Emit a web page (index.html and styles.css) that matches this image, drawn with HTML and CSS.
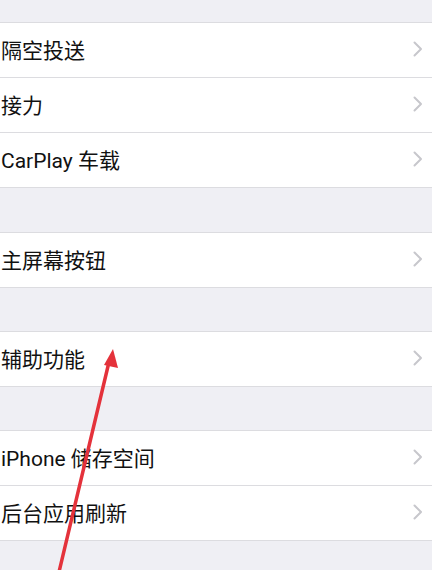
FILE: index.html
```html
<!DOCTYPE html>
<html lang="zh">
<head>
<meta charset="utf-8">
<link rel="stylesheet" href="styles.css">
</head>
<body>
<div class="screen">
  <div class="gap gap-top"></div>
  <div class="group">
    <div class="row"><span class="label">隔空投送</span><svg class="chev" width="10" height="16" viewBox="0 0 10 16"><polyline points="1.5,1.5 8,8 1.5,14.5"/></svg></div>
    <div class="row"><span class="label">接力</span><svg class="chev" width="10" height="16" viewBox="0 0 10 16"><polyline points="1.5,1.5 8,8 1.5,14.5"/></svg></div>
    <div class="row"><span class="label">CarPlay 车载</span><svg class="chev" width="10" height="16" viewBox="0 0 10 16"><polyline points="1.5,1.5 8,8 1.5,14.5"/></svg></div>
  </div>
  <div class="gap gap-wide"></div>
  <div class="group">
    <div class="row"><span class="label">主屏幕按钮</span><svg class="chev" width="10" height="16" viewBox="0 0 10 16"><polyline points="1.5,1.5 8,8 1.5,14.5"/></svg></div>
  </div>
  <div class="gap"></div>
  <div class="group">
    <div class="row"><span class="label">辅助功能</span><svg class="chev" width="10" height="16" viewBox="0 0 10 16"><polyline points="1.5,1.5 8,8 1.5,14.5"/></svg></div>
  </div>
  <div class="gap"></div>
  <div class="group">
    <div class="row"><span class="label">iPhone 储存空间</span><svg class="chev" width="10" height="16" viewBox="0 0 10 16"><polyline points="1.5,1.5 8,8 1.5,14.5"/></svg></div>
    <div class="row"><span class="label">后台应用刷新</span><svg class="chev" width="10" height="16" viewBox="0 0 10 16"><polyline points="1.5,1.5 8,8 1.5,14.5"/></svg></div>
  </div>
  <div class="gap gap-bottom"></div>
  <svg class="arrow" width="432" height="570" viewBox="0 0 432 570">
    <line x1="59" y1="572" x2="109" y2="362" stroke="#e4323b" stroke-width="3.5" stroke-linecap="round"/>
    <polygon points="113,349 118,368 104,365" fill="#e4323b"/>
  </svg>
</div>
</body>
</html>
```
FILE: styles.css
```css
html, body {
  margin: 0;
  padding: 0;
}
body {
  width: 432px;
  height: 570px;
  overflow: hidden;
  background: #efeff4;
  font-family: Roboto, "Noto Sans CJK SC", sans-serif;
}
.screen {
  position: relative;
  width: 432px;
  height: 570px;
  display: flex;
  flex-direction: column;
}
.gap {
  height: 43px;
  flex: none;
  background: #efeff4;
}
.gap-top {
  height: 22px;
}
.gap-wide {
  height: 44px;
}
.gap-bottom {
  height: 29px;
}
.group {
  flex: none;
  background: #fff;
  border-top: 1px solid #dcdce0;
  display: flex;
  flex-direction: column;
}
.row {
  height: 55px;
  display: flex;
  align-items: center;
  justify-content: space-between;
  padding: 0 9px 2px 1px;
  box-sizing: border-box;
  border-bottom: 1px solid #dcdce0;
}
.label {
  font-size: 21px;
  color: #111;
}
.chev {
  fill: none;
  stroke: #c7c7cc;
  stroke-width: 2;
  stroke-linecap: round;
  stroke-linejoin: round;
}
.arrow {
  position: absolute;
  left: 0;
  top: 0;
  pointer-events: none;
}
```
